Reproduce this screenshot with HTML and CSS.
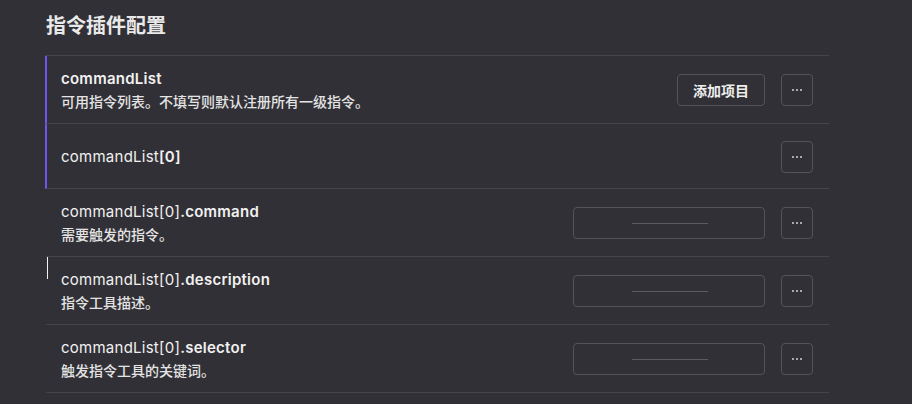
FILE: index.html
```html
<!DOCTYPE html>
<html lang="zh-CN">
<head>
<meta charset="utf-8">
<title>指令插件配置</title>
<link rel="stylesheet" href="styles.css">
</head>
<body>
<main class="page">
  <h1 class="title">指令插件配置</h1>
  <div class="list">
    <div class="row row-active">
      <div class="info">
        <div class="label"><b>commandList</b></div>
        <div class="desc">可用指令列表。不填写则默认注册所有一级指令。</div>
      </div>
      <div class="actions">
        <button class="btn">添加项目</button>
        <button class="more"><i></i><i></i><i></i></button>
      </div>
    </div>
    <div class="row row-active row-single">
      <div class="info">
        <div class="label">commandList<b>[0]</b></div>
      </div>
      <div class="actions">
        <button class="more"><i></i><i></i><i></i></button>
      </div>
    </div>
    <div class="row">
      <div class="info">
        <div class="label">commandList[0]<b>.command</b></div>
        <div class="desc">需要触发的指令。</div>
      </div>
      <div class="actions">
        <div class="input"><span class="line"></span></div>
        <button class="more"><i></i><i></i><i></i></button>
      </div>
    </div>
    <div class="row row-caret">
      <div class="info">
        <div class="label">commandList[0]<b>.description</b></div>
        <div class="desc">指令工具描述。</div>
      </div>
      <div class="actions">
        <div class="input"><span class="line"></span></div>
        <button class="more"><i></i><i></i><i></i></button>
      </div>
    </div>
    <div class="row">
      <div class="info">
        <div class="label">commandList[0]<b>.selector</b></div>
        <div class="desc">触发指令工具的关键词。</div>
      </div>
      <div class="actions">
        <div class="input"><span class="line"></span></div>
        <button class="more"><i></i><i></i><i></i></button>
      </div>
    </div>
  </div>
</main>
</body>
</html>
```
FILE: styles.css
```css
html, body {
  margin: 0;
  padding: 0;
  background: #313036;
}
body {
  font-family: Inter, "Noto Sans CJK SC", sans-serif;
  color: #ececec;
}
.page {
  width: 784px;
  padding: 0 0 0 45px;
}
.title {
  margin: 0;
  padding: 11px 0 0 1px;
  height: 55px;
  box-sizing: border-box;
  font-family: "Noto Sans CJK SC", sans-serif;
  font-size: 20px;
  line-height: 28px;
  font-weight: 700;
  color: #e9e9e9;
}
.list {
  border-top: 1px solid #45444a;
}
.row {
  position: relative;
  display: flex;
  align-items: center;
  justify-content: space-between;
  box-sizing: border-box;
  min-height: 65px;
  padding: 12px 16px 11px 14px;
  border-left: 2px solid transparent;
  border-bottom: 1px solid #45444a;
}
.row-active {
  border-left-color: #6b58ee;
}
.row-caret::before {
  content: "";
  position: absolute;
  left: 0;
  top: 0;
  width: 1px;
  height: 22px;
  background: #f2f2f2;
}
.label {
  font-size: 15px;
  line-height: 22px;
  letter-spacing: 0.25px;
  color: #f1f1f1;
  font-weight: 400;
}
.label b {
  font-weight: 600;
}
.desc {
  font-family: "Noto Sans CJK SC", sans-serif;
  font-size: 14px;
  line-height: 22px;
  font-weight: 500;
  color: #e4e4e4;
}
.actions {
  display: flex;
  align-items: center;
  gap: 16px;
}
.btn {
  height: 32px;
  width: 88px;
  box-sizing: border-box;
  background: transparent;
  border: 1px solid #54535a;
  border-radius: 4px;
  color: #ededed;
  font-family: "Noto Sans CJK SC", sans-serif;
  font-size: 14px;
  font-weight: 700;
  padding: 0;
}
.more {
  width: 32px;
  height: 32px;
  box-sizing: border-box;
  background: transparent;
  border: 1px solid #54535a;
  border-radius: 4px;
  padding: 0;
  display: flex;
  align-items: center;
  justify-content: center;
  gap: 2px;
}
.more i {
  display: block;
  width: 2px;
  height: 2px;
  background: #a9a9ad;
}
.input {
  width: 192px;
  height: 32px;
  box-sizing: border-box;
  border: 1px solid #54535a;
  border-radius: 4px;
  display: flex;
  align-items: center;
  justify-content: center;
}
.line {
  display: block;
  width: 76px;
  height: 1px;
  background: #5c5b61;
  margin-left: 2px;
}
```
